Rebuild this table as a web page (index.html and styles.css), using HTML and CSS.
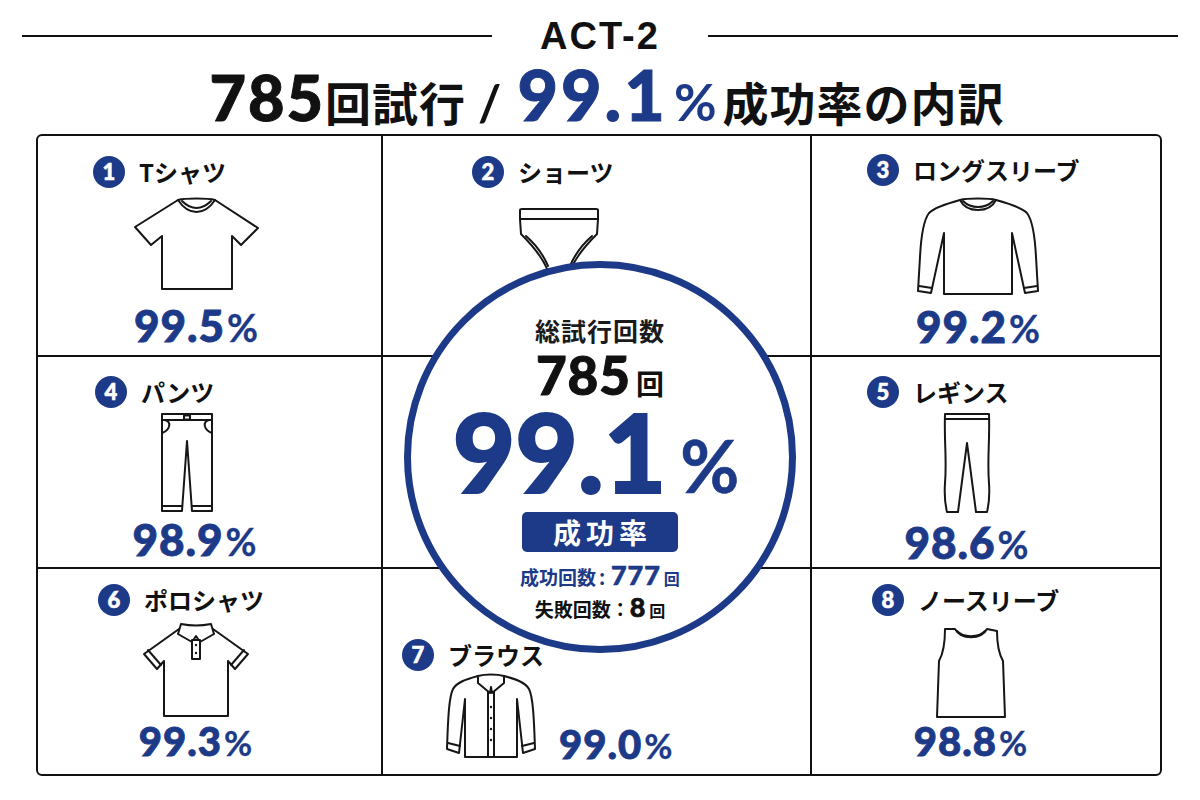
FILE: index.html
```html
<!DOCTYPE html>
<html lang="ja">
<head>
<meta charset="utf-8">
<title>ACT-2 内訳</title>
<link rel="stylesheet" href="styles.css">
</head>
<body>
<div class="page">
  <header class="header">
    <div class="act-row"><span class="rule"></span><span class="act">ACT-2</span><span class="rule"></span></div>
    <h1 class="title"><span class="t-num">785</span><span class="t-jp">回試行</span><span class="t-slash">/</span><span class="t-num big navy">99.1</span><span class="t-pc navy">%</span><span class="t-jp">成功率の内訳</span></h1>
  </header>

  <section class="board">
    <!-- 1 -->
    <div class="cell c1 br bb">
      <div class="item">
        <div class="head"><span class="badge">1</span><span class="label">Tシャツ</span></div>
        <svg class="icon" width="128" height="94" viewBox="0 0 128 94">
          <path d="M45 3 L2 30 L18 48 L29 39 L29 92 L99 92 L99 39 L108 48 L125 31 L82 3 C76 12 70 15 63.5 15 C57 15 51 12 45 3 Z"/>
          <path class="nf" d="M45 3 C52 1 75 1 82 3"/>
          <path class="nf" d="M49 4 C54 9 59 11 63.5 11 C68 11 73 9 78 4"/>
        </svg>
        <div class="pct">99.5<span class="pc">%</span></div>
      </div>
    </div>
    <!-- 2 -->
    <div class="cell c2 br bb">
      <div class="item">
        <div class="head"><span class="badge">2</span><span class="label">ショーツ</span></div>
        <svg class="icon" width="84" height="62" viewBox="0 0 84 62">
          <path d="M3 2 Q3 1 5 1 H79 Q81 1 81 2 V11 L80 26 C72 34 60 46 54 61 H30 C24 46 12 34 4 26 L3 11 Z"/>
          <path class="nf" d="M3 11 H81"/>
          <path class="nf" d="M9 28 C17 35 26 46 31 58"/>
          <path class="nf" d="M75 28 C67 35 58 46 53 58"/>
        </svg>
      </div>
    </div>
    <!-- 3 -->
    <div class="cell c3 bb">
      <div class="item">
        <div class="head"><span class="badge">3</span><span class="label">ロングスリーブ</span></div>
        <svg class="icon" width="124" height="99" viewBox="0 0 124 99">
          <path d="M43 3 C32 6 18 10 12 16 C6 24 4 40 3 60 L1 94 L14 96 L27 36 L27 97 L95 97 L95 36 L108 96 L121 94 L119 60 C118 40 116 24 110 16 C104 10 90 6 79 3 C75 11 69 13 61 13 C53 13 47 11 43 3 Z"/>
          <path class="nf" d="M43 3 C50 1 72 1 79 3"/>
          <path class="nf" d="M46 4 C50 8 55 10 61 10 C67 10 72 8 76 4"/>
          <path class="nf" d="M2 89 L15 91"/>
          <path class="nf" d="M107 91 L120 89"/>
        </svg>
        <div class="pct">99.2<span class="pc">%</span></div>
      </div>
    </div>
    <!-- 4 -->
    <div class="cell c4 br bb">
      <div class="item">
        <div class="head"><span class="badge">4</span><span class="label">パンツ</span></div>
        <svg class="icon" width="54" height="100" viewBox="0 0 54 100">
          <path d="M2 1 H52 L52 98 H32 L27 28 L22 98 H2 Z"/>
          <path class="nf" d="M2 7 H52"/>
          <rect class="nf" x="24" y="2.5" width="6" height="4"/>
          <path class="nf" d="M5 7 C12 9 10 17 2 20"/>
          <path class="nf" d="M49 7 C42 9 44 17 52 20"/>
          <path class="nf" d="M2 93 H22"/>
          <path class="nf" d="M32 93 H52"/>
        </svg>
        <div class="pct">98.9<span class="pc">%</span></div>
      </div>
    </div>
    <!-- middle (under the circle) -->
    <div class="cell c-mid br bb"></div>
    <!-- 5 -->
    <div class="cell c5 bb">
      <div class="item">
        <div class="head"><span class="badge">5</span><span class="label">レギンス</span></div>
        <svg class="icon" width="50" height="101" viewBox="0 0 50 101">
          <path d="M3 1 H47 C48 30 45 45 47 70 C48 85 46 95 45 99 H34 L25 30 L16 99 H5 C4 95 2 85 3 70 C5 45 2 30 3 1 Z"/>
          <path class="nf" d="M3 6 H47"/>
        </svg>
        <div class="pct">98.6<span class="pc">%</span></div>
      </div>
    </div>
    <!-- 6 -->
    <div class="cell c6 br">
      <div class="item">
        <div class="head"><span class="badge">6</span><span class="label">ポロシャツ</span></div>
        <svg class="icon" width="110" height="96" viewBox="0 0 110 96">
          <path d="M38 7 L3 32 L16 47 L23 39 L23 94 L87 94 L87 39 L94 47 L107 32 L72 7 Z"/>
          <path d="M40 2 Q55 5 70 2 L73 12 L59 20 L55 14 L51 20 L37 12 Z"/>
          <rect x="51" y="18" width="8" height="19"/>
          <circle class="dot" cx="55" cy="23" r="1.2"/>
          <circle class="dot" cx="55" cy="31" r="1.2"/>
          <path class="nf" d="M7 28 L20 43"/>
          <path class="nf" d="M103 28 L90 43"/>
        </svg>
        <div class="pct sm">99.3<span class="pc">%</span></div>
      </div>
    </div>
    <!-- 7 -->
    <div class="cell c7 br">
      <div class="item">
        <div class="head"><span class="badge">7</span><span class="label">ブラウス</span></div>
        <div class="row7">
          <svg class="icon" width="94" height="86" viewBox="0 0 94 86">
            <path d="M33 3 C22 6 12 9 8 16 C4 24 3 45 2 76 L14 80 L20 26 L20 84 L72 84 L72 26 L78 80 L90 76 C89 45 88 24 84 16 C80 9 70 6 59 3 Z"/>
            <path d="M43 14 V84 H49 V14 Z"/>
            <path d="M33 3 C40 1 52 1 59 3 L59 10 L47 20 L46 14 L45 20 L33 10 Z"/>
            <circle class="dot" cx="46" cy="34" r="1.2"/>
            <circle class="dot" cx="46" cy="45" r="1.2"/>
            <circle class="dot" cx="46" cy="56" r="1.2"/>
            <circle class="dot" cx="46" cy="67" r="1.2"/>
            <path class="nf" d="M3 70 L15 73"/>
            <path class="nf" d="M77 73 L89 70"/>
          </svg>
          <div class="pct sm">99.0<span class="pc">%</span></div>
        </div>
      </div>
    </div>
    <!-- 8 -->
    <div class="cell c8">
      <div class="item">
        <div class="head"><span class="badge">8</span><span class="label">ノースリーブ</span></div>
        <svg class="icon" width="72" height="91" viewBox="0 0 72 91">
          <path d="M10 1 L20 1 C26 12 46 12 52 1 L62 3 C62 16 64 26 68 33 L70 89 L2 89 L4 33 C8 26 10 16 10 1 Z"/>
          <path class="nf" d="M22 3 C28 10 44 10 50 3"/>
        </svg>
        <div class="pct sm">98.8<span class="pc">%</span></div>
      </div>
    </div>

    <div class="circle">
      <div class="c-label">総試行回数</div>
      <div class="c-total"><span class="n">785</span><span class="u">回</span></div>
      <div class="c-rate"><span class="n">99.1</span><span class="u">%</span></div>
      <div class="c-badge">成功率</div>
      <div class="c-line navy"><span class="k">成功回数</span><span class="colon">:</span><span class="n">777</span><span class="u">回</span></div>
      <div class="c-line"><span class="k">失敗回数：</span><span class="n">8</span><span class="u">回</span></div>
    </div>
  </section>
</div>
</body>
</html>
```

FILE: styles.css
```css
* { box-sizing: border-box; }

html, body {
  margin: 0;
  padding: 0;
  background: #ffffff;
}

body {
  font-family: "Lato", "Noto Sans CJK JP", sans-serif;
  color: #111111;
}

.page {
  width: 1200px;
  height: 800px;
}

.navy { color: #1d3a88; }

/* ---------- header ---------- */
.header {
  height: 134px;
  padding-top: 16px;
}

.act-row {
  display: flex;
  align-items: center;
  gap: 43px;
  height: 40px;
  padding: 0 22px;
}

.rule {
  flex: 1;
  height: 2px;
  background: #111111;
}

.act {
  width: 130px;
  text-align: center;
  font-family: "Liberation Sans", "Noto Sans", sans-serif;
  font-weight: 700;
  font-size: 38px;
  letter-spacing: 2px;
  line-height: 40px;
}

.title {
  margin: 7px 0 0;
  padding-left: 14px;
  height: 62px;
  text-align: center;
  white-space: nowrap;
  font-weight: 400;
  font-size: 62px;
  line-height: 62px;
}

.t-num {
  font-family: "Lato", sans-serif;
  font-weight: 900;
  font-size: 63px;
  letter-spacing: 2px;
  -webkit-text-stroke: 1px #111111;
}
.t-num.big {
  font-size: 70px;
  letter-spacing: 3px;
  -webkit-text-stroke: 1px #1d3a88;
}

.t-jp {
  font-family: "Noto Sans CJK JP", sans-serif;
  font-weight: 700;
  font-size: 46px;
  letter-spacing: 1px;
}

.t-slash {
  font-family: "Lato", sans-serif;
  font-weight: 700;
  font-size: 50px;
  margin: 0 16px 0 12px;
}

.t-pc {
  font-family: "Lato", sans-serif;
  font-weight: 700;
  font-size: 52px;
  margin: 0 6px 0 6px;
}

/* ---------- board ---------- */
.board {
  position: relative;
  margin-left: 36px;
  width: 1126px;
  height: 642px;
  border: 2px solid #111111;
  border-radius: 6px;
  display: grid;
  grid-template-columns: 345px 429px 1fr;
  grid-template-rows: 221px 212px 1fr;
}

.br { border-right: 2px solid #111111; }
.bb { border-bottom: 2px solid #111111; }

.item {
  display: flex;
  flex-direction: column;
  align-items: center;
}

.head {
  align-self: flex-start;
  display: flex;
  align-items: center;
  gap: 14px;
  height: 30px;
}

.badge {
  flex: none;
  width: 32px;
  height: 32px;
  border-radius: 50%;
  background: #1d3a88;
  color: #ffffff;
  font-family: "Lato", sans-serif;
  font-weight: 900;
  font-size: 22px;
  line-height: 32px;
  text-align: center;
  -webkit-text-stroke: 0.6px #ffffff;
}

.label {
  font-family: "Noto Sans CJK JP", sans-serif;
  font-weight: 700;
  font-size: 24px;
  line-height: 30px;
  color: #111111;
}

.icon { display: block; overflow: visible; }
.icon path, .icon rect {
  fill: #ffffff;
  stroke: #161616;
  stroke-width: 2;
  stroke-linejoin: round;
  stroke-linecap: round;
}
.icon .nf { fill: none; }
.icon .dot { fill: #161616; stroke: none; }

.pct {
  font-family: "Lato", sans-serif;
  font-weight: 900;
  font-size: 44px;
  line-height: 1;
  color: #1d3a88;
  letter-spacing: 1px;
  -webkit-text-stroke: 0.9px #1d3a88;
}
.pct.sm { font-size: 40px; }
.pc {
  font-family: "Lato", sans-serif;
  font-weight: 700;
  font-size: 0.86em;
  margin-left: 2px;
  -webkit-text-stroke: 0.3px #1d3a88;
}

/* per-cell placement */
.c1 { padding: 21px 0 0 55px; }
.c1 .item { width: 207px; }
.c1 .icon { margin-top: 10px; }
.c1 .pct { margin-top: 12px; }

.c2 { padding: 21px 0 0 89px; }
.c2 .item { width: 174px; }
.c2 .icon { margin-top: 21px; }

.c3 { padding: 19px 0 0 55px; }
.c3 .item { width: 223px; }
.c3 .icon { margin-top: 12px; }
.c3 .pct { margin-top: 8px; }

.c4 { padding: 20px 0 0 57px; }
.c4 .item { width: 200px; }
.c4 .icon { margin-top: 6px; margin-right: 16px; }
.c4 .pct { margin-top: 4px; }

.c5 { padding: 20px 0 0 55px; }
.c5 .item { width: 200px; }
.c5 .icon { margin-top: 6px; }
.c5 .pct { margin-top: 6px; }

.c6 { padding: 16px 0 0 60px; }
.c6 .item { width: 196px; }
.c6 .icon { margin-top: 7px; }
.c6 .pct { margin-top: 3px; }

.c7 { padding: 71px 0 0 19px; }
.c7 .item { align-items: flex-start; }
.row7 {
  display: flex;
  align-items: flex-end;
  margin-top: 3px;
  margin-left: 43px;
  gap: 20px;
}
.row7 .pct { margin-bottom: -5px; }

.c8 { padding: 16px 0 0 60px; }
.c8 .item { width: 198px; }
.c8 .icon { margin-top: 13px; }
.c8 .pct { margin-top: 2px; }

/* ---------- central circle ---------- */
.circle {
  position: absolute;
  left: 366px;
  top: 125px;
  width: 392px;
  height: 392px;
  border: 7px solid #1d3a88;
  border-radius: 50%;
  background: #ffffff;
  display: flex;
  flex-direction: column;
  align-items: center;
  padding-top: 50px;
}

.c-label {
  font-family: "Noto Sans CJK JP", sans-serif;
  font-weight: 700;
  font-size: 25px;
  line-height: 25px;
  height: 25px;
  color: #1a1a1a;
  letter-spacing: 1px;
}

.c-total {
  margin-top: 6px;
  height: 52px;
  line-height: 52px;
  white-space: nowrap;
}
.c-total .n {
  font-family: "Lato", sans-serif;
  font-weight: 900;
  font-size: 53px;
  letter-spacing: 1px;
  -webkit-text-stroke: 1px #111111;
}
.c-total .u {
  font-family: "Noto Sans CJK JP", sans-serif;
  font-weight: 700;
  font-size: 28px;
  margin-left: 5px;
}

.c-rate {
  margin-top: 7px;
  height: 86px;
  line-height: 86px;
  white-space: nowrap;
  color: #1d3a88;
  margin-right: 8px;
}
.c-rate .n {
  font-family: "Lato", sans-serif;
  font-weight: 900;
  font-size: 108px;
  letter-spacing: 0;
  -webkit-text-stroke: 2px #1d3a88;
}
.c-rate .u {
  font-family: "Lato", sans-serif;
  font-weight: 700;
  font-size: 72px;
  margin-left: 14px;
  -webkit-text-stroke: 0.6px #1d3a88;
}

.c-badge {
  margin-top: 18px;
  width: 156px;
  height: 40px;
  border-radius: 5px;
  background: #1d3a88;
  color: #ffffff;
  font-family: "Noto Sans CJK JP", sans-serif;
  font-weight: 700;
  font-size: 28px;
  line-height: 40px;
  text-align: center;
  letter-spacing: 5px;
  text-indent: 5px;
}

.c-line {
  margin-top: 6px;
  height: 26px;
  line-height: 26px;
  white-space: nowrap;
  display: flex;
  align-items: baseline;
}
.c-line.navy { margin-top: 10px; }
.c-line .k {
  font-family: "Noto Sans CJK JP", sans-serif;
  font-weight: 700;
  font-size: 19px;
}
.c-line .colon {
  font-family: "Lato", sans-serif;
  font-weight: 900;
  font-size: 22px;
  margin: 0 6px 0 3px;
}
.c-line .n {
  font-family: "Lato", sans-serif;
  font-weight: 900;
  font-size: 27px;
  letter-spacing: 1px;
  -webkit-text-stroke: 0.6px currentColor;
}
.c-line .u {
  font-family: "Noto Sans CJK JP", sans-serif;
  font-weight: 700;
  font-size: 16px;
  margin-left: 3px;
}
```
